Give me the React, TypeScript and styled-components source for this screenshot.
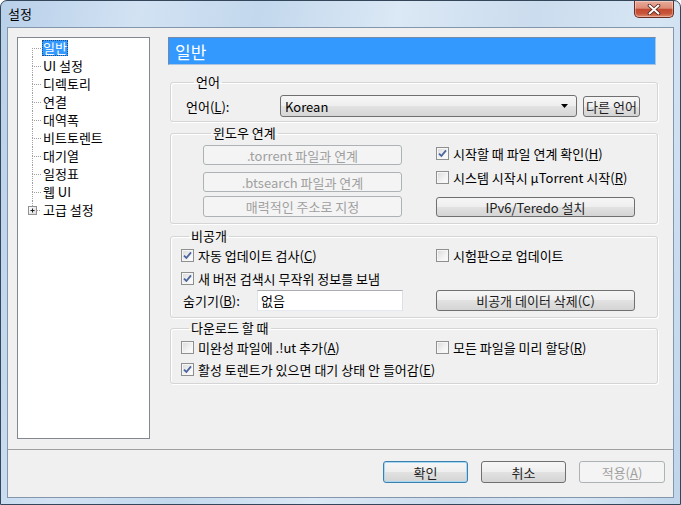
import React from "react";
import styled, { createGlobalStyle, css } from "styled-components";

const GlobalStyle = createGlobalStyle`
  html, body { margin: 0; padding: 0; background: #ffffff; }
  body {
    font-family: "Noto Sans CJK KR", "Noto Sans", sans-serif;
    font-size: 13px;
    font-weight: 400;
    color: #000;
  }
  * { box-sizing: border-box; }
`;

const Window = styled.div`
  width: 681px;
  height: 505px;
  display: flex;
  flex-direction: column;
  border: 1px solid #34465a;
  border-radius: 7px 7px 0 0;
  padding: 0 6px 6px 6px;
  background: linear-gradient(
    100deg,
    #b8d0e9 0%,
    #d2e2f3 18%,
    #c3d8ed 34%,
    #dbe8f5 52%,
    #cbdcee 70%,
    #d7e6f4 86%,
    #bfd5eb 100%
  );
`;

const TitleBar = styled.div`
  height: 26px;
  flex: none;
  display: flex;
  justify-content: space-between;
  align-items: flex-start;
  padding-left: 1px;
`;

const TitleText = styled.span`
  line-height: 26px;
  font-size: 13px;
  color: #000;
`;

const CloseButton = styled.div`
  width: 40px;
  height: 17px;
  display: flex;
  align-items: center;
  justify-content: center;
  border: 1px solid #6b2c22;
  border-top: none;
  border-radius: 0 0 5px 5px;
  background: linear-gradient(
    to bottom,
    #e9ab9b 0%,
    #dc8c77 45%,
    #c24a31 52%,
    #c7553a 78%,
    #e08a6c 100%
  );
  box-shadow: inset 0 0 0 1px rgba(255, 255, 255, 0.35);
`;

const Client = styled.div`
  flex: 1;
  display: flex;
  flex-direction: column;
  background: #f0f0f0;
  border: 1px solid #8396ab;
`;

const MainRow = styled.div`
  display: flex;
  padding: 9px 0 0 9px;
`;

const Tree = styled.div`
  width: 133px;
  height: 402px;
  flex: none;
  background: #ffffff;
  border: 1px solid #828790;
  padding-top: 1px;
`;

const TreeRow = styled.div`
  height: 18px;
  display: flex;
  align-items: center;
  padding-left: 14px;
`;

const Connector = styled.div`
  width: 9px;
  height: 18px;
  display: flex;
  flex-direction: column;
  flex: none;
`;

const ConnTop = styled.div<{ $first?: boolean }>`
  height: 9px;
  border-left: 1px dotted ${(p) => (p.$first ? "transparent" : "#a0a0a0")};
`;

const ConnBottom = styled.div`
  flex: 1;
  border-left: 1px dotted #a0a0a0;
  border-top: 1px dotted #a0a0a0;
`;

const ExpanderIcon = styled.svg`
  margin-left: -4px;
  flex: none;
`;

const TreeLabel = styled.span<{ $selected?: boolean }>`
  margin-left: 1px;
  padding: 0 1px;
  height: 16px;
  line-height: 16px;
  white-space: nowrap;
  ${(p) =>
    p.$selected &&
    css`
      background: #3399ff;
      color: #ffffff;
      outline: 1px dotted #1a4f8a;
      outline-offset: -1px;
    `}
`;

const RightPanel = styled.div`
  width: 490px;
  margin-left: 18px;
  display: flex;
  flex-direction: column;
`;

const Header = styled.div`
  height: 28px;
  margin-right: 2px;
  display: flex;
  align-items: center;
  padding-left: 6px;
  background: #3399ff;
  color: #ffffff;
  font-size: 17px;
  border: 1px solid;
  border-color: #6e8bab #a9c5e2 #a9c5e2 #6e8bab;
`;

const Group = styled.fieldset<{ $top: number; $pad: string }>`
  margin: ${(p) => p.$top}px 0 0 2px;
  min-width: 0;
  padding: ${(p) => p.$pad};
  border: 1px solid #d5d5d5;
  border-radius: 3px;
  box-shadow: inset 1px 1px 0 #ffffff, 1px 1px 0 #ffffff;
`;

const Legend = styled.legend`
  margin-left: 8px;
  padding: 0 2px;
  line-height: 14px;
  font-size: 13px;
`;

const LangRow = styled.div`
  height: 22px;
  display: flex;
  align-items: center;
`;

const FieldLabel = styled.span<{ $w: number; $indent?: number }>`
  width: ${(p) => p.$w}px;
  padding-left: ${(p) => p.$indent ?? 0}px;
  flex: none;
  white-space: nowrap;
`;

const Select = styled.div`
  width: 297px;
  height: 22px;
  margin-right: 6px;
  display: flex;
  align-items: center;
  justify-content: space-between;
  padding: 0 8px 0 4px;
  border: 1px solid #707070;
  border-radius: 3px;
  background: linear-gradient(to bottom, #f6f6f6 0%, #eeeeee 50%, #e2e2e2 50%, #d6d6d6 100%);
`;

type BtnKind = "normal" | "default" | "disabled";

const PushButton = styled.div<{ $kind?: BtnKind; $w?: number; $h?: number }>`
  width: ${(p) => (p.$w ? `${p.$w}px` : "100%")};
  height: ${(p) => p.$h ?? 20}px;
  flex: none;
  display: flex;
  align-items: center;
  justify-content: center;
  border-radius: 3px;
  white-space: nowrap;
  border: 1px solid #707070;
  background: linear-gradient(to bottom, #f6f6f6 0%, #eeeeee 50%, #e2e2e2 50%, #d4d4d4 100%);
  color: #1e1e1e;
  ${(p) =>
    p.$kind === "default" &&
    css`
      border-color: #3c7fb1;
      box-shadow: inset 0 0 0 1px #a6d8f4;
    `}
  ${(p) =>
    p.$kind === "disabled" &&
    css`
      border-color: #adb2b5;
      background: #f4f4f4;
      color: #a0a0a0;
    `}
`;

const TwoColumns = styled.div`
  display: grid;
  grid-template-columns: 199px 199px;
  column-gap: 34px;
`;

const Column = styled.div`
  display: flex;
  flex-direction: column;
`;

const Spacer = styled.div<{ $h: number }>`
  height: ${(p) => p.$h}px;
  flex: none;
`;

const OptionGrid = styled.div<{ $rows: string }>`
  display: grid;
  grid-template-columns: 222px 199px;
  grid-template-rows: ${(p) => p.$rows};
  column-gap: 33px;
  align-items: start;
`;

const CheckRow = styled.label`
  height: 16px;
  display: flex;
  align-items: center;
  gap: 4px;
  white-space: nowrap;
`;

const Box = styled.span`
  width: 13px;
  height: 13px;
  flex: none;
  display: flex;
  align-items: center;
  justify-content: center;
  border: 1px solid #8e8f8f;
  background: linear-gradient(135deg, #d9d9d9 0%, #f1f1f1 55%, #ffffff 100%);
  box-shadow: inset 0 0 0 1px #f6f6f6;
`;

const InputRow = styled.div`
  height: 21px;
  display: flex;
  align-items: center;
`;

const TextInput = styled.div`
  width: 146px;
  height: 21px;
  display: flex;
  align-items: center;
  padding: 0 3px;
  background: #ffffff;
  border: 1px solid;
  border-color: #abadb3 #dbdfe6 #e3e9ef #e2e3ea;
`;

const Footer = styled.div`
  margin-top: 10px;
  border-top: 1px solid #a0a0a0;
  display: flex;
  justify-content: flex-end;
  gap: 13px;
  padding: 11px 8px 0 0;
`;

const Check: React.FC<{ checked?: boolean; children: React.ReactNode }> = ({ checked, children }) => (
  <CheckRow>
    <Box>
      {checked && (
        <svg width="9" height="9" viewBox="0 0 9 9">
          <path d="M1 4.6 L3.4 7 L8 1.4" fill="none" stroke="#4a64a0" strokeWidth="1.8" />
        </svg>
      )}
    </Box>
    <span>{children}</span>
  </CheckRow>
);

const treeItems = ["일반", "UI 설정", "디렉토리", "연결", "대역폭", "비트토렌트", "대기열", "일정표", "웹 UI"];

export default function App() {
  return (
    <>
      <GlobalStyle />
      <Window>
        <TitleBar>
          <TitleText>설정</TitleText>
          <CloseButton>
            <svg width="14" height="11" viewBox="0 0 14 11">
              <path d="M2.5 1.5 L11.5 9.5 M11.5 1.5 L2.5 9.5" stroke="#4a1c15" strokeWidth="3.6" strokeLinecap="round" />
              <path d="M2.5 1.5 L11.5 9.5 M11.5 1.5 L2.5 9.5" stroke="#ffffff" strokeWidth="2" strokeLinecap="round" />
            </svg>
          </CloseButton>
        </TitleBar>
        <Client>
          <MainRow>
            <Tree>
              {treeItems.map((t, i) => (
                <TreeRow key={t}>
                  <Connector>
                    <ConnTop $first={i === 0} />
                    <ConnBottom />
                  </Connector>
                  <TreeLabel $selected={i === 0}>{t}</TreeLabel>
                </TreeRow>
              ))}
              <TreeRow>
                <ExpanderIcon width="13" height="18" viewBox="0 0 13 18">
                  <path d="M4.5 0 V5" stroke="#a0a0a0" strokeWidth="1" strokeDasharray="1 1" />
                  <defs>
                    <linearGradient id="exg" x1="0" y1="0" x2="1" y2="1">
                      <stop offset="0" stopColor="#ffffff" />
                      <stop offset="1" stopColor="#d8d8d8" />
                    </linearGradient>
                  </defs>
                  <rect x="0.5" y="5.5" width="8" height="8" fill="url(#exg)" stroke="#919191" />
                  <path d="M2.5 9.5 H6.5 M4.5 7.5 V11.5" stroke="#1e1e1e" strokeWidth="1" />
                  <path d="M9 9.5 H13" stroke="#a0a0a0" strokeWidth="1" strokeDasharray="1 1" />
                </ExpanderIcon>
                <TreeLabel>고급 설정</TreeLabel>
              </TreeRow>
            </Tree>

            <RightPanel>
              <Header>일반</Header>

              <Group $top={10} $pad="6px 0 4px 15px">
                <Legend>언어</Legend>
                <LangRow>
                  <FieldLabel $w={94}>
                    언어(<u>L</u>):
                  </FieldLabel>
                  <Select>
                    <span>Korean</span>
                    <svg width="7" height="4" viewBox="0 0 7 4">
                      <path d="M0 0 H7 L3.5 4 Z" fill="#000" />
                    </svg>
                  </Select>
                  <PushButton $w={57} $h={21}>
                    다른 언어
                  </PushButton>
                </LangRow>
              </Group>

              <Group $top={4} $pad="5px 0 6px 32px">
                <Legend>윈도우 연계</Legend>
                <TwoColumns>
                  <Column>
                    <PushButton $kind="disabled" $h={20}>
                      .torrent 파일과 연계
                    </PushButton>
                    <Spacer $h={7} />
                    <PushButton $kind="disabled" $h={20}>
                      .btsearch 파일과 연계
                    </PushButton>
                    <Spacer $h={4} />
                    <PushButton $kind="disabled" $h={21}>
                      매력적인 주소로 지정
                    </PushButton>
                  </Column>
                  <Column>
                    <Check checked>
                      시작할 때 파일 연계 확인(<u>H</u>)
                    </Check>
                    <Spacer $h={8} />
                    <Check>
                      시스템 시작시 µTorrent 시작(<u>R</u>)
                    </Check>
                    <Spacer $h={12} />
                    <PushButton $h={20}>IPv6/Teredo 설치</PushButton>
                  </Column>
                </TwoColumns>
              </Group>

              <Group $top={5} $pad="4px 0 6px 10px">
                <Legend>비공개</Legend>
                <OptionGrid $rows="23px 20px 21px">
                  <Check checked>
                    자동 업데이트 검사(<u>C</u>)
                  </Check>
                  <Check>시험판으로 업데이트</Check>
                  <Check checked>새 버전 검색시 무작위 정보를 보냄</Check>
                  <span />
                  <InputRow>
                    <FieldLabel $w={76} $indent={2}>
                      숨기기(<u>B</u>):
                    </FieldLabel>
                    <TextInput>없음</TextInput>
                  </InputRow>
                  <PushButton $h={21}>비공개 데이터 삭제(C)</PushButton>
                </OptionGrid>
              </Group>

              <Group $top={3} $pad="4px 0 6px 10px">
                <Legend>다운로드 할 때</Legend>
                <OptionGrid $rows="22px 16px">
                  <Check>
                    미완성 파일에 .!ut 추가(<u>A</u>)
                  </Check>
                  <Check>
                    모든 파일을 미리 할당(<u>R</u>)
                  </Check>
                  <Check checked>
                    활성 토렌트가 있으면 대기 상태 안 들어감(<u>E</u>)
                  </Check>
                </OptionGrid>
              </Group>
            </RightPanel>
          </MainRow>

          <Footer>
            <PushButton $kind="default" $w={85} $h={22}>
              확인
            </PushButton>
            <PushButton $w={85} $h={22}>
              취소
            </PushButton>
            <PushButton $kind="disabled" $w={86} $h={22}>
              적용(<u>A</u>)
            </PushButton>
          </Footer>
        </Client>
      </Window>
    </>
  );
}
